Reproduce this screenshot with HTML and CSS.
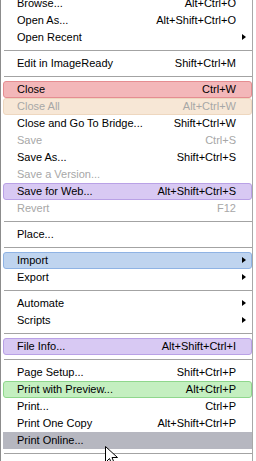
FILE: index.html
```html
<!DOCTYPE html>
<html lang="en">
<head>
    <meta charset="UTF-8">
    <title>File menu</title>
    <link rel="stylesheet" href="styles.css">
</head>
<body>
    <div class="menu">
        <div class="item"><span class="label">Browse...</span><span class="keys">Alt+Ctrl+O</span><span class="sub"></span></div>
        <div class="item"><span class="label">Open As...</span><span class="keys">Alt+Shift+Ctrl+O</span><span class="sub"></span></div>
        <div class="item"><span class="label">Open Recent</span><span class="keys"></span><span class="sub"><i class="arrow"></i></span></div>
        <div class="sep"></div>
        <div class="item"><span class="label">Edit in ImageReady</span><span class="keys">Shift+Ctrl+M</span><span class="sub"></span></div>
        <div class="sep"></div>
        <div class="item red"><span class="label">Close</span><span class="keys">Ctrl+W</span><span class="sub"></span></div>
        <div class="item peach off"><span class="label">Close All</span><span class="keys">Alt+Ctrl+W</span><span class="sub"></span></div>
        <div class="item"><span class="label">Close and Go To Bridge...</span><span class="keys">Shift+Ctrl+W</span><span class="sub"></span></div>
        <div class="item off"><span class="label">Save</span><span class="keys">Ctrl+S</span><span class="sub"></span></div>
        <div class="item"><span class="label">Save As...</span><span class="keys">Shift+Ctrl+S</span><span class="sub"></span></div>
        <div class="item off"><span class="label">Save a Version...</span><span class="keys"></span><span class="sub"></span></div>
        <div class="item violet"><span class="label">Save for Web...</span><span class="keys">Alt+Shift+Ctrl+S</span><span class="sub"></span></div>
        <div class="item off"><span class="label">Revert</span><span class="keys">F12</span><span class="sub"></span></div>
        <div class="sep"></div>
        <div class="item"><span class="label">Place...</span><span class="keys"></span><span class="sub"></span></div>
        <div class="sep"></div>
        <div class="item blue"><span class="label">Import</span><span class="keys"></span><span class="sub"><i class="arrow"></i></span></div>
        <div class="item"><span class="label">Export</span><span class="keys"></span><span class="sub"><i class="arrow"></i></span></div>
        <div class="sep"></div>
        <div class="item"><span class="label">Automate</span><span class="keys"></span><span class="sub"><i class="arrow"></i></span></div>
        <div class="item"><span class="label">Scripts</span><span class="keys"></span><span class="sub"><i class="arrow"></i></span></div>
        <div class="sep"></div>
        <div class="item violet"><span class="label">File Info...</span><span class="keys">Alt+Shift+Ctrl+I</span><span class="sub"></span></div>
        <div class="sep"></div>
        <div class="item"><span class="label">Page Setup...</span><span class="keys">Shift+Ctrl+P</span><span class="sub"></span></div>
        <div class="item green"><span class="label">Print with Preview...</span><span class="keys">Alt+Ctrl+P</span><span class="sub"></span></div>
        <div class="item"><span class="label">Print...</span><span class="keys">Ctrl+P</span><span class="sub"></span></div>
        <div class="item"><span class="label">Print One Copy</span><span class="keys">Alt+Shift+Ctrl+P</span><span class="sub"></span></div>
        <div class="item hover"><span class="label">Print Online...</span><span class="keys"></span><span class="sub"></span></div>
        <div class="sep"></div>
    </div>

    <!-- mouse pointer over the hovered item -->
    <svg class="cursor" width="13" height="20" viewBox="0 0 13 20">
        <path d="M0.5 0.5 L0.5 16.5 L4.5 12.5 L7 18.5 L9.5 17.5 L7 11.5 L12.5 11.5 Z" fill="#fff" stroke="#000" stroke-width="1"/>
    </svg>
</body>
</html>
```

FILE: styles.css
```css
html, body {
    margin: 0;
    padding: 0;
    background: #fff;
    overflow: hidden;
}

body {
    width: 256px;
    height: 461px;
    position: relative;
    font-family: "Liberation Sans", Arial, sans-serif;
    font-size: 11px;
    color: #000;
}

.menu {
    width: 251px;
    margin-top: -5px;
    border-left: 1px solid #8c8c8c;
    border-right: 1px solid #a8a8a8;
    padding-bottom: 10px;
}

.item {
    display: flex;
    align-items: center;
    height: 17px;
    line-height: 17px;
    margin-left: 2px;
    box-sizing: border-box;
    border: 1px solid transparent;
    border-radius: 3px;
    white-space: nowrap;
}

.label {
    flex: 1;
    padding-left: 13px;
}

.keys {
    text-align: right;
}

.sub {
    width: 15px;
    height: 15px;
    position: relative;
}

/* little black submenu triangle */
.arrow {
    position: absolute;
    left: 6px;
    top: 4px;
    width: 0;
    height: 0;
    border-top: 3.5px solid transparent;
    border-bottom: 3.5px solid transparent;
    border-left: 4px solid #000;
}

.off {
    color: #a7a7a7;
}

.sep {
    height: 9px;
    margin-left: 3px;
    position: relative;
}

.sep::after {
    content: "";
    position: absolute;
    left: 0;
    right: 0;
    top: 4px;
    height: 1px;
    background: #a3a3a3;
}

.red {
    background: #f3b7b9;
    border-color: #e58d91;
}

.peach {
    background: #f7e7d6;
    border-color: #eed7bf;
}

.violet {
    background: #d8c9f3;
    border-color: #b9a1e6;
}

.blue {
    background: #bfd4ef;
    border-color: #8fb3e4;
}

.green {
    background: #c4efc0;
    border-color: #8fd78c;
}

.hover {
    background: #b6b7c0;
    border-color: #b6b7c0;
    border-radius: 0;
}

.cursor {
    position: absolute;
    left: 105px;
    top: 446px;
}
```
